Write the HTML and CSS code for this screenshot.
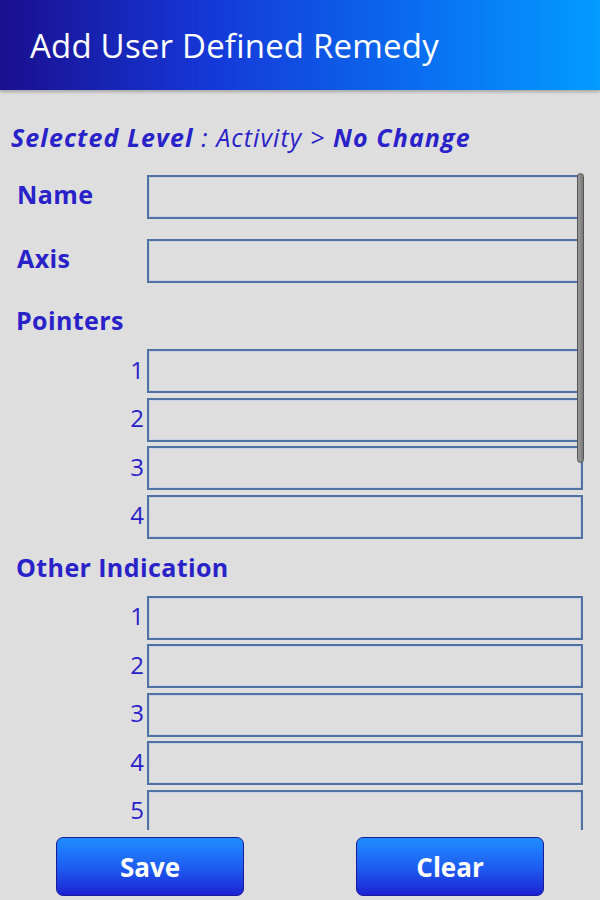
FILE: index.html
```html
<!DOCTYPE html>
<html>
<head>
<meta charset="utf-8">
<link rel="stylesheet" href="styles.css">
</head>
<body>
<header class="topbar"><h1 class="title">Add User Defined Remedy</h1></header>
<main class="content">
  <p class="level"><b>Selected Level</b> : Activity &gt; <b>No Change</b></p>
  <div class="scroller">
    <div class="row row-name"><span class="label">Name</span><div class="field"></div></div>
    <div class="row row-axis"><span class="label">Axis</span><div class="field"></div></div>
    <div class="section section-pointers">Pointers</div>
    <div class="list">
      <div class="item"><span class="num">1</span><div class="field"></div></div>
      <div class="item"><span class="num">2</span><div class="field"></div></div>
      <div class="item"><span class="num">3</span><div class="field"></div></div>
      <div class="item"><span class="num">4</span><div class="field"></div></div>
    </div>
    <div class="section section-other">Other Indication</div>
    <div class="list">
      <div class="item"><span class="num">1</span><div class="field"></div></div>
      <div class="item"><span class="num">2</span><div class="field"></div></div>
      <div class="item"><span class="num">3</span><div class="field"></div></div>
      <div class="item"><span class="num">4</span><div class="field"></div></div>
      <div class="item"><span class="num">5</span><div class="field"></div></div>
    </div>
    <div class="scrollbar"></div>
  </div>
  <footer class="actions">
    <div class="cell"><button class="btn">Save</button></div>
    <div class="cell"><button class="btn">Clear</button></div>
  </footer>
</main>
</body>
</html>
```
FILE: styles.css
```css
html, body {
  margin: 0;
  padding: 0;
}
body {
  width: 600px;
  height: 900px;
  overflow: hidden;
  background: #dedede;
  font-family: "Open Sans", "DejaVu Sans", sans-serif;
}
.topbar {
  height: 90px;
  display: flex;
  align-items: center;
  background: linear-gradient(to right, #1a0f8f 0%, #1538d8 35%, #0a6ef0 70%, #039cff 100%);
  box-shadow: 0 2px 3px rgba(0,0,0,0.25);
  position: relative;
  z-index: 1;
}
.title {
  margin: 0 0 0 30px;
  font-size: 33px;
  font-weight: normal;
  color: #fff;
  letter-spacing: 0.2px;
}
.content {
  display: flex;
  flex-direction: column;
}
.level {
  margin: 29px 0 0 11px;
  height: 36px;
  line-height: 36px;
  font-size: 25px;
  letter-spacing: 1.1px;
  font-style: italic;
  color: #2a22c9;
}
.level b {
  font-weight: bold;
}
.scroller {
  position: relative;
  height: 675px;
  overflow: hidden;
  padding-top: 20px;
  box-sizing: border-box;
}
.row {
  display: flex;
  align-items: center;
  padding-left: 17px;
}
.row-axis {
  margin-top: 20px;
}
.label {
  width: 130px;
  font-size: 25px;
  letter-spacing: 0.4px;
  font-weight: bold;
  color: #2a22c9;
  margin-top: -6px;
}
.field {
  width: 432px;
  height: 40px;
  border: 2px solid #4f72a2;
  box-shadow: inset 0 0 0 1px #c9d3df;
}
.section {
  padding-left: 16px;
  font-size: 25px;
  letter-spacing: 0.4px;
  font-weight: bold;
  color: #2a22c9;
  height: 32px;
  line-height: 32px;
}
.section-pointers {
  margin-top: 21px;
  margin-bottom: 13px;
}
.section-other {
  margin-top: 12px;
  margin-bottom: 13px;
}
.list {
  display: flex;
  flex-direction: column;
  gap: 4.5px;
}
.item {
  display: flex;
  align-items: center;
}
.num {
  width: 147px;
  text-align: right;
  padding-right: 3px;
  box-sizing: border-box;
  font-size: 24px;
  color: #2a22c9;
  margin-top: -4px;
}
.scrollbar {
  position: absolute;
  left: 577px;
  top: 18px;
  width: 7px;
  height: 290px;
  border-radius: 4px;
  background: linear-gradient(to right, #9a9a9a, #7a7a7a);
  border: 1px solid #555;
  box-sizing: border-box;
}
.actions {
  display: flex;
  padding-top: 7px;
}
.cell {
  flex: 1;
  display: flex;
  justify-content: center;
}
.btn {
  width: 188px;
  height: 59px;
  border: 1px solid #1b1a9a;
  border-radius: 7px;
  background: linear-gradient(to bottom, #1f8dff 0%, #1e5ff2 50%, #1c22d2 100%);
  color: #fff;
  font-family: "Open Sans", "DejaVu Sans", sans-serif;
  font-size: 26px;
  font-weight: bold;
  padding: 0;
}
```
